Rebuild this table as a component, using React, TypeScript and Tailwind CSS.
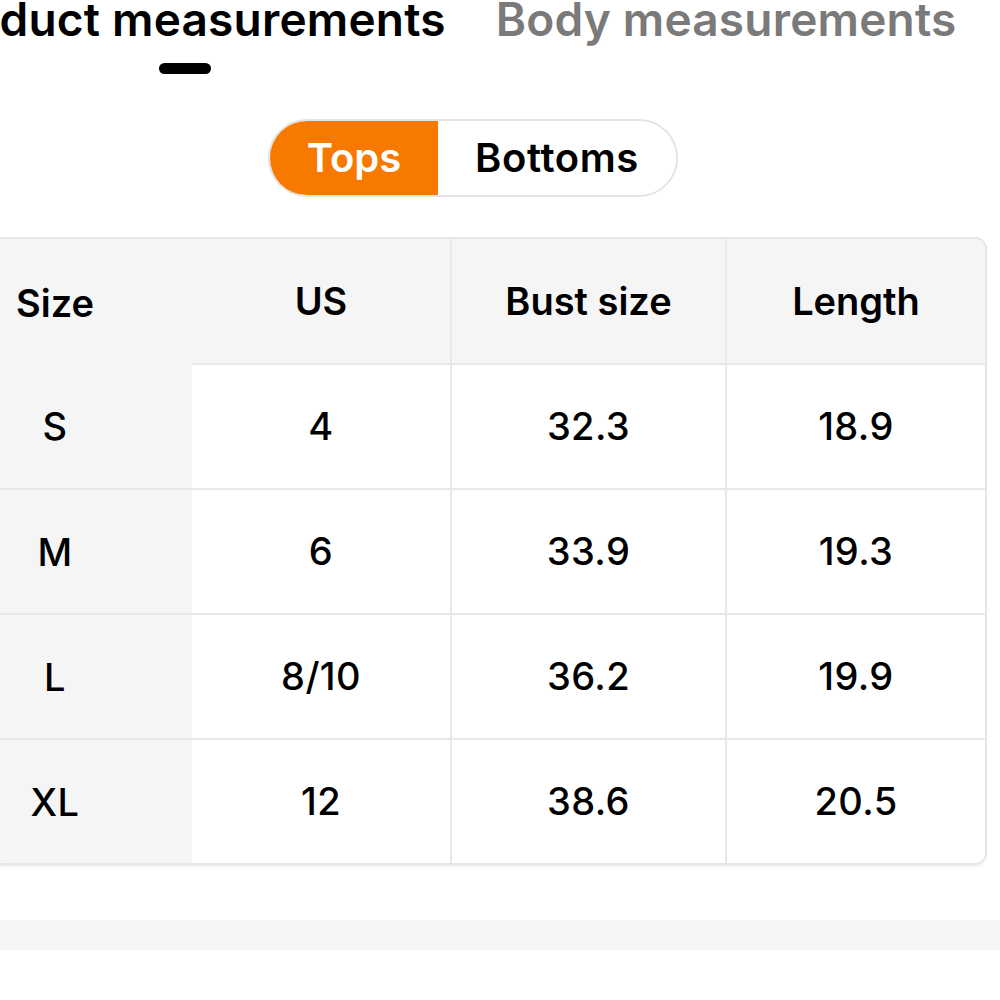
import React, { useState } from 'react';

const rows = [
  { size: 'S', us: '4', bust: '32.3', length: '18.9' },
  { size: 'M', us: '6', bust: '33.9', length: '19.3' },
  { size: 'L', us: '8/10', bust: '36.2', length: '19.9' },
  { size: 'XL', us: '12', bust: '38.6', length: '20.5' },
];

const App = () => {
  const [tab] = useState('product');
  const [kind, setKind] = useState('tops');

  return (
    <div className="w-[1000px] h-[1000px] overflow-hidden bg-white text-black" style={{ fontFamily: 'Inter, "Noto Sans", sans-serif' }}>
      {/* Tabs */}
      <div className="flex items-start gap-[50px] ml-[-76px] whitespace-nowrap">
        <div className="flex flex-col items-center">
          <div className={`text-[46px] leading-[38px] font-semibold tracking-[0.2px] ${tab === 'product' ? 'text-black' : 'text-[#777]'}`}>
            Product measurements
          </div>
          <div className="mt-[25px] w-[52px] h-[11px] rounded-full bg-black" />
        </div>
        <div className="text-[46px] leading-[38px] font-semibold tracking-[0.2px] text-[#7a7a7a]">
          Body measurements
        </div>
      </div>

      {/* Tops / Bottoms */}
      <div className="ml-[268px] mt-[45px] flex w-[410px] h-[78px] rounded-full border-2 border-[#e3e3e3] overflow-hidden">
        <button
          onClick={() => setKind('tops')}
          className={`w-[168px] h-full flex items-center justify-center text-[40px] font-semibold ${kind === 'tops' ? 'bg-[#f77900] text-white' : 'bg-white text-black'}`}
        >
          Tops
        </button>
        <button
          onClick={() => setKind('bottoms')}
          className={`flex-1 h-full flex items-center justify-center text-[40px] font-semibold tracking-[0.6px] ${kind === 'bottoms' ? 'bg-[#f77900] text-white' : 'bg-white text-black'}`}
        >
          Bottoms
        </button>
      </div>

      {/* Size table */}
      <div className="ml-[-10px] mt-[40px] w-[997px] rounded-xl border-2 border-[#e6e6e6] overflow-hidden shadow-[0_2px_2px_rgba(0,0,0,0.06)]">
        <div className="grid grid-cols-[200px_258px_275px_1fr] bg-[#f5f5f5] h-[124px] text-[38px] font-semibold">
          <div className="flex items-center pt-[4px]">
            <span className="w-[126px] text-center">Size</span>
          </div>
          <div className="flex items-center justify-center">US</div>
          <div className="flex items-center justify-center border-l-2 border-[#e8e8e8]">Bust size</div>
          <div className="flex items-center justify-center border-l-2 border-[#e8e8e8]">Length</div>
        </div>
        {rows.map((r, i) => (
          <div key={r.size} className={`grid grid-cols-[200px_258px_275px_1fr] h-[125px] text-[38px] font-medium tracking-[0.4px] ${i > 0 ? 'border-t-2 border-[#e8e8e8]' : ''}`}>
            <div className="flex items-center bg-[#f5f5f5] pt-[2px]">
              <span className="w-[126px] text-center">{r.size}</span>
            </div>
            <div className={`flex items-center justify-center bg-white ${i === 0 ? 'border-t-2 border-[#e8e8e8]' : ''}`}>{r.us}</div>
            <div className={`flex items-center justify-center bg-white border-l-2 border-[#e8e8e8] ${i === 0 ? 'border-t-2' : ''}`}>{r.bust}</div>
            <div className={`flex items-center justify-center bg-white border-l-2 border-[#e8e8e8] ${i === 0 ? 'border-t-2' : ''}`}>{r.length}</div>
          </div>
        ))}
      </div>

      <div className="mt-[55px] h-[30px] bg-[#f5f5f5]" />
    </div>
  );
};

export default App;
